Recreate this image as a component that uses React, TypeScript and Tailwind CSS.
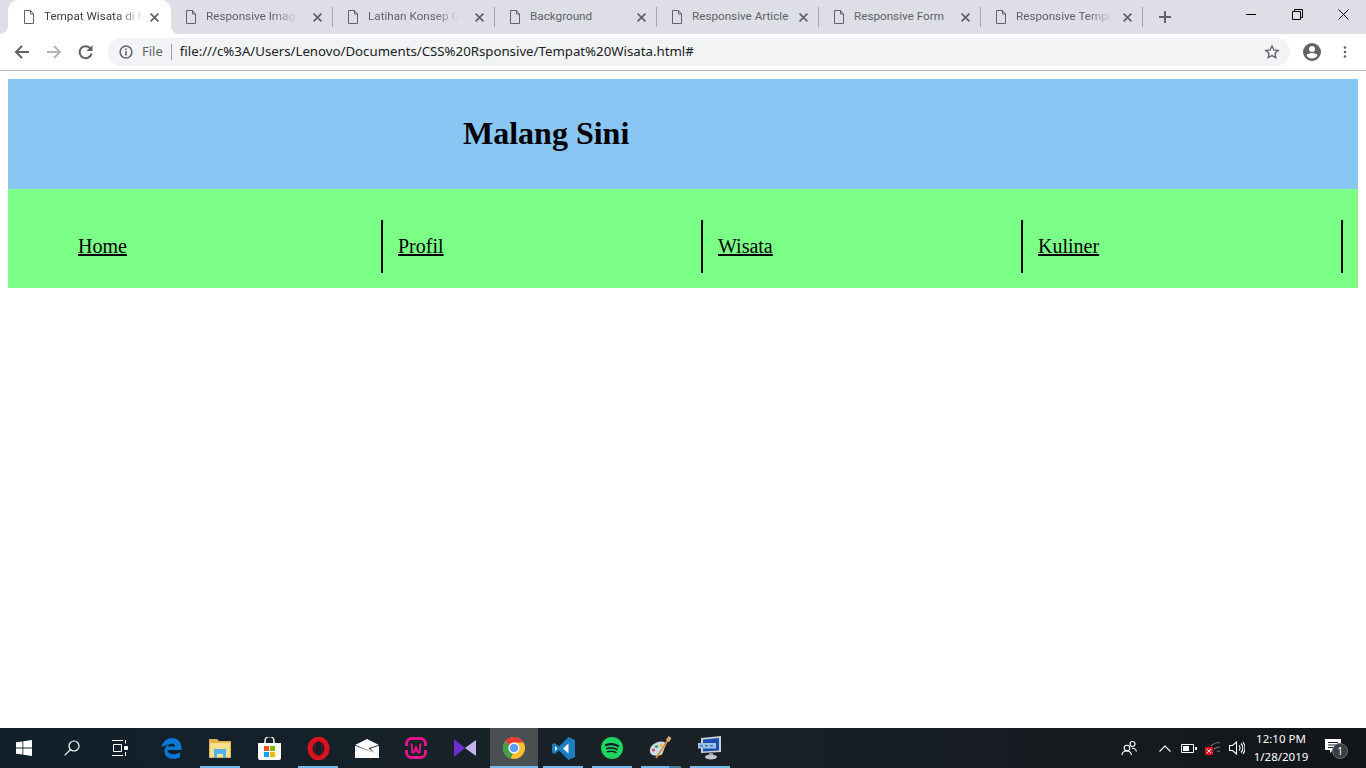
import React from "react";

const Doc = () => (
  <svg width="12" height="14" viewBox="0 0 12 14" className="shrink-0" fill="none" stroke="#5f6368" strokeWidth="1">
    <path d="M1.500 .5h6l3 3.500v9.500h-9z" />
    <path d="M7.500 .5v3.500h3" />
  </svg>
);

const X = () => (
  <svg width="9" height="9" viewBox="0 0 9 9" className="shrink-0" stroke="#5f6368" strokeWidth="1.700">
    <path d="M.6 .6l7.800 7.800M8.400 .6L.6 8.400" />
  </svg>
);

const tabs = [
  { t: "Responsive Image", fade: true },
  { t: "Latihan Konsep Gr", fade: true },
  { t: "Background", fade: false },
  { t: "Responsive Article", fade: false },
  { t: "Responsive Form", fade: false },
  { t: "Responsive Templa", fade: true },
];

function Title({ title, fade, active }: { title: string; fade: boolean; active?: boolean }) {
  const color = active ? "text-[#3c4043]" : "text-[#5f6368]";
  return (
    <div className="ml-[9px] w-[100px] whitespace-nowrap text-[11.700px] font-['Roboto',sans-serif]">
      {fade ? (
        <span className={`inline-block ${color} [mask-image:linear-gradient(to_right,black_70%,transparent_96%)]`}>{title}</span>
      ) : (
        <span className={color}>{title}</span>
      )}
    </div>
  );
}

const Slot = ({ children, on, active, split }: { children: React.ReactNode; on?: boolean; active?: boolean; split?: boolean }) => (
  <div className={active ? "relative w-[48px] h-[40px] flex items-center justify-center bg-[#4a4f51]" : "relative w-[48px] h-[40px] flex items-center justify-center"}>
    {children}
    {on && <div className={active ? "absolute bottom-0 left-0 right-0 h-[2px] bg-[#76b9ed]" : "absolute bottom-0 left-[4px] right-[4px] h-[2px] bg-[#76b9ed]"} />}
    {split && <div className="absolute bottom-0 left-[32px] right-[4px] h-[2px] bg-[#4f7f9f]" />}
  </div>
);

export default function App() {
  return (
    <div className="w-[1366px] h-[768px] overflow-hidden flex flex-col bg-white font-['Noto_Sans','Open_Sans',sans-serif]">
      {/* tab strip */}
      <div className="h-[34px] shrink-0 bg-[#dddee6] flex pl-[8px] relative">
        <div className="relative w-[163px] h-[34px] bg-white rounded-t-[10px] flex items-center pl-[15px] pr-[12px]">
          <div className="absolute -left-[8px] bottom-0 w-[8px] h-[8px] bg-white">
            <div className="w-full h-full bg-[#dddee6] rounded-br-[8px]" />
          </div>
          <div className="absolute -right-[8px] bottom-0 w-[8px] h-[8px] bg-white">
            <div className="w-full h-full bg-[#dddee6] rounded-bl-[8px]" />
          </div>
          <Doc />
          <Title title="Tempat Wisata di M" fade active />
          <div className="ml-auto"><X /></div>
        </div>
        <div className="flex">
          {tabs.map((t) => (
            <div key={t.t} className="relative w-[162px] h-[34px] flex items-center pl-[14px] pr-[11px]">
              <Doc />
              <Title title={t.t} fade={t.fade} />
              <div className="ml-auto"><X /></div>
              <div className="absolute right-0 top-[7px] w-px h-[20px] bg-[#a5a7ab]" />
            </div>
          ))}
        </div>
        <svg width="14" height="14" viewBox="0 0 14 14" className="ml-[15px] mt-[10px]" stroke="#5f6368" strokeWidth="2"><path d="M7 1v12M1 7h12" /></svg>
        <div className="ml-auto flex h-[34px]">
          <div className="w-[46px] flex justify-center pt-[14px]"><div className="w-[10px] h-px bg-black" /></div>
          <div className="w-[46px] flex justify-center pt-[9px]">
            <svg width="11" height="11" viewBox="0 0 11 11" fill="none" stroke="#000"><path d="M.5 2.500h8v8h-8zM2.500 2.500v-2h8v8h-2" /></svg>
          </div>
          <div className="w-[46px] flex justify-center pt-[9px]">
            <svg width="11" height="11" viewBox="0 0 11 11" stroke="#000"><path d="M.5 .5l10 10M10.500 .5l-10 10" /></svg>
          </div>
        </div>
      </div>
      {/* toolbar */}
      <div className="h-[37px] shrink-0 bg-white border-b border-[#b5b5b5] flex items-center pb-[1px]">
        <svg width="16" height="16" viewBox="0 0 16 16" className="ml-[14px]" fill="none" stroke="#5f6368" strokeWidth="2"><path d="M15 8H2M8 2L2 8l6 6" /></svg>
        <svg width="16" height="16" viewBox="0 0 16 16" className="ml-[16px]" fill="none" stroke="#b3b5b8" strokeWidth="2"><path d="M1 8h13M8 2l6 6-6 6" /></svg>
        <svg width="16" height="16" viewBox="0 0 16 16" className="ml-[16px]" fill="none" stroke="#5f6368" strokeWidth="2"><path d="M13.500 9.500A6 6 0 1 1 12 4" /><path d="M14.500 1v6h-6z" fill="#5f6368" stroke="none" /></svg>
        <div className="ml-[14px] w-[1182px] h-[28px] rounded-full bg-[#f1f3f4] flex items-center">
          <svg width="14" height="14" viewBox="0 0 14 14" className="ml-[11px]" fill="none" stroke="#5f6368" strokeWidth="1.500"><circle cx="7" cy="7" r="5.900" /><path d="M7 6v4.500M7 3.500v1.500" /></svg>
          <span className="ml-[9px] mt-[1px] text-[13px] text-[#5f6368]">File</span>
          <div className="ml-[8px] w-px h-[16px] bg-[#9aa0a6]" />
          <span className="ml-[8px] mt-[1px] text-[13.240px] text-[#202124] whitespace-nowrap">file:///c%3A/Users/Lenovo/Documents/CSS%20Rsponsive/Tempat%20Wisata.html#</span>
          <svg width="16" height="16" viewBox="0 0 24 24" className="ml-auto mr-[10px]" fill="none" stroke="#5f6368" strokeWidth="2"><path d="M12 3l2.800 5.900 6.400.8-4.700 4.400 1.200 6.400L12 17.400l-5.700 3.100 1.200-6.400L2.800 9.700l6.400-.8z" /></svg>
        </div>
        <svg width="18" height="18" viewBox="0 0 18 18" className="ml-[13px]" fill="#5f6368"><path fillRule="evenodd" d="M9 0a9 9 0 1 0 0 18A9 9 0 0 0 9 0zm0 3a3 3 0 1 1 0 6 3 3 0 0 1 0-6zm0 12.500c-2.300 0-4.300-1.100-5.500-2.900C3.600 11 7 10 9 10s5.400 1 5.500 2.600c-1.200 1.800-3.200 2.900-5.500 2.900z" /></svg>
        <svg width="4" height="14" viewBox="0 0 4 14" className="ml-[22px]" fill="#5f6368"><circle cx="2" cy="2.500" r="1.300" /><circle cx="2" cy="7" r="1.300" /><circle cx="2" cy="11.500" r="1.300" /></svg>
      </div>
      {/* page */}
      <div className="flex-1 pt-[8px] px-[8px] font-['Liberation_Serif',serif] text-black">
        <div className="h-[110px] bg-[#89c6f4] flex items-center pl-[455px] pb-[2px]">
          <h1 className="text-[32px] font-bold leading-none">Malang Sini</h1>
        </div>
        <div className="h-[99px] bg-[#7bff87] pl-[55px] pt-[31px]">
          <ul className="flex">
            {["Home", "Profil", "Wisata", "Kuliner"].map((n) => (
              <li key={n} className="w-[320px] h-[53px] border-r-2 border-black pl-[15px] pt-[15px] text-[20px] leading-[23px]">
                <a href="#" className="underline">{n}</a>
              </li>
            ))}
          </ul>
        </div>
      </div>
      {/* taskbar */}
      <div className="h-[40px] shrink-0 bg-gradient-to-r from-[#10202b] via-[#1a2227] to-[#12161a] flex items-center text-white">
        <div className="w-[48px] flex justify-center">
          <svg width="16" height="16" viewBox="0 0 16 16" fill="#fff"><path d="M0 2.300l6.500-.9v6.200H0zM7.300 1.300L16 0v7.600H7.300zM0 8.400h6.500v6.200L0 13.700zM7.300 8.400H16V16l-8.700-1.300z" /></svg>
        </div>
        <div className="w-[48px] flex justify-center">
          <svg width="16" height="16" viewBox="0 0 16 16" fill="none" stroke="#fff" strokeWidth="1.200"><circle cx="10" cy="6" r="5" /><path d="M6.500 9.500L.7 15.300" /></svg>
        </div>
        <div className="w-[48px] flex justify-center">
          <svg width="16" height="16" viewBox="0 0 16 16" fill="none" stroke="#fff"><path d="M0 .5h11M0 15.500h11M1.500 4.500h8v7h-8zM13.500 0v3.500M13.500 12v4" /><path d="M12.500 6.500h3v3h-3z" fill="#fff" /></svg>
        </div>
        <div className="ml-[3px] flex gap-px">
          <Slot>
            <svg width="21" height="21" viewBox="0 0 21 21"><path fill="#0a78d7" d="M.5 9.500C1.500 3.500 6 0 11 0c5.500 0 9.500 3.800 9.500 10v2H6.500c.3 4.500 7 5.800 12.500 2.500v4.800c-5.500 2.700-15.500 2.400-15.500-6.300 0-2.800 1.500-5 4-6.500C4.900 7 2.500 8 .5 9.500zM6.800 8.500H14c0-4-6.500-4-7.200 0z" /></svg>
          </Slot>
          <Slot on>
            <svg width="22" height="19" viewBox="0 0 22 19"><path fill="#e2b34f" d="M0 0h8l2 2h12v17H0z" /><path fill="#fbe08e" d="M1 4h20v14H1z" /><path fill="#4db5e8" d="M5 10h12v9h-3v-4H8v4H5z" /></svg>
          </Slot>
          <Slot>
            <svg width="23" height="23" viewBox="0 0 23 23"><path fill="none" stroke="#fff" strokeWidth="1.500" d="M7 7V4a4 4 0 0 1 9 0v3" /><path fill="#fff" d="M0 6h23v15a2 2 0 0 1-2 2H2a2 2 0 0 1-2-2z" /><path fill="#f25022" d="M6 9h5v5H6z" /><path fill="#7fba00" d="M12 9h5v5h-5z" /><path fill="#00a4ef" d="M6 15h5v5H6z" /><path fill="#ffb900" d="M12 15h5v5h-5z" /></svg>
          </Slot>
          <Slot on>
            <svg width="23" height="23" viewBox="0 0 23 23"><ellipse cx="11.500" cy="11.500" rx="8.500" ry="9.400" fill="none" stroke="#d8121f" strokeWidth="5" /><ellipse cx="11.500" cy="11.500" rx="4" ry="7.500" fill="none" stroke="#8f0c14" strokeWidth=".7" /></svg>
          </Slot>
          <Slot>
            <svg width="24" height="19" viewBox="0 0 24 19"><path fill="#fff" d="M12 0l12 6v13H0V6z" /><path fill="#1a2227" d="M0 5.800L19.500 14 13.500 9.300 24 5.800v1L15.500 9.500l4 4.500L0 6.800z" /></svg>
          </Slot>
          <Slot>
            <svg width="22" height="22" viewBox="0 0 22 22" fill="none" stroke="#e5138c" strokeWidth="3"><path d="M1.500 9V6.500a5 5 0 0 1 5-5h9a5 5 0 0 1 5 5V9M1.500 13v2.500a5 5 0 0 0 5 5h9a5 5 0 0 0 5-5V13" /><path strokeWidth="2" d="M6.500 6.500l1 9h1.500l2-5 2 5h1.500l1-9" /></svg>
          </Slot>
          <Slot>
            <svg width="22" height="18" viewBox="0 0 22 18"><path fill="#6a2fce" d="M0 0l11 9-11 9z" /><path fill="#c9b2f0" d="M22 1L11 9l11 8z" /></svg>
          </Slot>
          <Slot on active>
            <svg width="22" height="22" viewBox="0 0 22 22"><circle cx="11" cy="11" r="11" fill="#fbc02d" /><path fill="#e53935" d="M11 0a11 11 0 0 1 9.500 5.500H11a5.500 5.500 0 0 0-5 3L2.200 4A11 11 0 0 1 11 0z" /><path fill="#43a047" d="M2.200 4L6 8.500A5.500 5.500 0 0 0 10 16.400L7.500 21.400A11 11 0 0 1 2.200 4z" /><circle cx="11" cy="11" r="5.500" fill="#fff" /><circle cx="11" cy="11" r="4.300" fill="#5c9df5" /></svg>
          </Slot>
          <Slot on>
            <svg width="23" height="23" viewBox="0 0 23 23"><path fill="#1b7ec2" d="M16.500 0L23 3v17l-6.500 3L7 13.500 2.500 17 0 15.500v-8L2.500 6 7 9.500z" /><path fill="#fff" d="M16.500 6.500l-5.500 5 5.500 5zM3 9v5l2.500-2.500z" /></svg>
          </Slot>
          <Slot on>
            <svg width="22" height="22" viewBox="0 0 22 22"><circle cx="11" cy="11" r="11" fill="#1ed760" /><path fill="none" stroke="#16222a" strokeLinecap="round" strokeWidth="2.200" d="M5 8c4-1.200 8.500-1 12 1" /><path fill="none" stroke="#16222a" strokeLinecap="round" strokeWidth="1.800" d="M5.800 11.500c3.500-1 7-.8 10.200 1" /><path fill="none" stroke="#16222a" strokeLinecap="round" strokeWidth="1.500" d="M6.500 14.700c3-.7 5.800-.5 8.500.8" /></svg>
          </Slot>
          <Slot on split>
            <svg width="24" height="24" viewBox="0 0 24 24"><path fill="#c7dfee" d="M1 16C0 10 6 6 12 5.500c3 0 5 1 5 3l-4 10c-4 2-11 2-12-2.500z" /><circle cx="4.500" cy="14" r="1.600" fill="#d94c4c" /><circle cx="7.500" cy="10.500" r="1.600" fill="#43a047" /><circle cx="12" cy="9" r="1.600" fill="#f2b632" /><path stroke="#e08a2e" strokeWidth="1.800" d="M7 22L19 4" /><path stroke="#d9b27a" strokeWidth="3.500" d="M18.500 5L21 1" /></svg>
          </Slot>
          <Slot on>
            <svg width="24" height="24" viewBox="0 0 24 24"><path fill="#c9d3da" d="M3 2l20-2v16l-20 1z" /><path fill="#1f4fb0" d="M5 3.500l16-1.500v12.500L5 15.500z" /><path fill="#9cc3e6" d="M0 7h18v5.500H0z" /><path fill="#3f78c4" d="M2 9h3v1.500H2zM7 9h3v1.500H7zM12 9h3v1.500h-3z" /><path fill="#8f979c" d="M11 17h4v3h-4z" /><ellipse cx="13" cy="21" rx="6" ry="2.500" fill="#c0c6ca" /></svg>
          </Slot>
        </div>
        <div className="ml-auto flex items-center">
          <svg width="16" height="16" viewBox="0 0 16 16" fill="none" stroke="#fff" strokeWidth="1.100"><circle cx="6" cy="8" r="2.800" /><path d="M1 15c0-3 2-4 5-4s4 1.500 4.500 4" /><circle cx="11.500" cy="4" r="2.500" /><path d="M11 8.500c2-.5 4 .5 4.500 3" /></svg>
          <svg width="12" height="7" viewBox="0 0 12 7" className="ml-[22px]" fill="none" stroke="#fff" strokeWidth="1.100"><path d="M.5 6.500L6 1l5.500 5.500" /></svg>
          <svg width="16" height="9" viewBox="0 0 16 9" className="ml-[10px]" fill="none" stroke="#fff"><path d="M.5 .5h12v8H.5z" /><path fill="#fff" stroke="none" d="M2 2h6v5H2zM14 3h2v3h-2z" /></svg>
          <svg width="16" height="14" viewBox="0 0 16 14" className="ml-[8px]"><path fill="none" stroke="#6d7478" strokeWidth="1.200" d="M6 5c3-3 6-3.500 9-3.500M9 8c2-1.500 4-2 6-2M12 11c1-.5 2-1 3-1" /><rect x="0" y="6" width="8" height="8" rx="1" fill="#e81123" /><path stroke="#fff" d="M2 8l4 4M6 8l-4 4" /></svg>
          <svg width="16" height="14" viewBox="0 0 16 14" className="ml-[8px]" fill="none" stroke="#fff" strokeWidth="1.100"><path d="M.5 4.500h3L7.500 1v12l-4-3.500h-3zM10 4.500a3.500 3.500 0 0 1 0 5M12 2.500a6.500 6.500 0 0 1 0 9M13.800 1a9 9 0 0 1 0 12" /></svg>
          <div className="ml-[10px] w-[52px] flex flex-col items-center text-[11.500px] leading-[18px] whitespace-nowrap">
            <span>12:10 PM</span>
            <span>1/28/2019</span>
          </div>
          <div className="relative ml-[18px] mr-[25px] w-[16px] h-[22px]">
            <svg width="16" height="15" viewBox="0 0 16 15" className="mt-[2px]" fill="#fff"><path d="M0 0h16v11H8l-3 3v-3H0z" /><path stroke="#1a2227" d="M3 3.500h10M3 6h10M3 8.500h7" /></svg>
            <div className="absolute left-[7px] top-[6px] w-[16px] h-[16px] rounded-full bg-[#3b3f42] border border-[#6a6e70] flex items-center justify-center text-[10px] leading-none">1</div>
          </div>
        </div>
      </div>
    </div>
  );
}
